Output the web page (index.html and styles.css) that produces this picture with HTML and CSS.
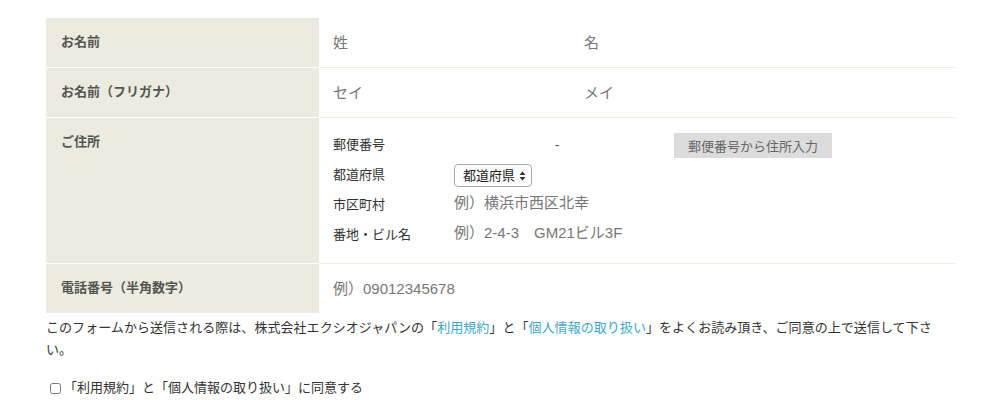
FILE: index.html
```html
<!DOCTYPE html>
<html lang="ja">
<head>
    <meta charset="UTF-8">
    <meta name="viewport" content="width=device-width, initial-scale=1.0">
    <title>お問い合わせフォーム</title>
    <link rel="stylesheet" href="styles.css">
</head>
<body>
    <table class="form-table">
        <tr>
            <th>お名前</th>
            <td>
                <div class="name-pair">
                    <input class="field name" type="text" placeholder="姓">
                    <input class="field name" type="text" placeholder="名">
                </div>
            </td>
        </tr>
        <tr>
            <th>お名前（フリガナ）</th>
            <td>
                <div class="name-pair">
                    <input class="field name" type="text" placeholder="セイ">
                    <input class="field name" type="text" placeholder="メイ">
                </div>
            </td>
        </tr>
        <tr>
            <th>ご住所</th>
            <td class="address">
                <div class="address-grid">
                    <span class="sub-label">郵便番号</span>
                    <div class="zip-row">
                        <input class="field zip" type="text">
                        <span class="dash">-</span>
                        <input class="field zip" type="text">
                        <button class="zip-btn" type="button">郵便番号から住所入力</button>
                    </div>

                    <span class="sub-label">都道府県</span>
                    <div>
                        <span class="select-wrap">
                            <select class="pref">
                                <option>都道府県</option>
                                <option>神奈川県</option>
                                <option>東京都</option>
                            </select>
                            <svg class="select-arrow" width="7" height="10" viewBox="0 0 7 10">
                                <path d="M0.5 4 L3.5 0.5 L6.5 4 Z M0.5 6 L3.5 9.5 L6.5 6 Z" fill="#333"/>
                            </svg>
                        </span>
                    </div>

                    <span class="sub-label">市区町村</span>
                    <input class="field wide" type="text" placeholder="例）横浜市西区北幸">

                    <span class="sub-label">番地・ビル名</span>
                    <input class="field wide" type="text" placeholder="例）2-4-3　GM21ビル3F">
                </div>
            </td>
        </tr>
        <tr class="last">
            <th>電話番号（半角数字）</th>
            <td><input class="field wide" type="text" placeholder="例）09012345678"></td>
        </tr>
    </table>

    <p class="notice">このフォームから送信される際は、株式会社エクシオジャパンの「<a href="#">利用規約</a>」と「<a href="#">個人情報の取り扱い</a>」をよくお読み頂き、ご同意の上で送信して下さい。</p>

    <label class="agree">
        <input type="checkbox">
        <span>「利用規約」と「個人情報の取り扱い」に同意する</span>
    </label>
</body>
</html>
```

FILE: styles.css
```css
body {
    font-family: "Liberation Sans", "Noto Sans CJK JP", sans-serif;
    margin: 0;
    padding: 18px 46px 0;
    background-color: #fff;
    color: #333;
    text-spacing-trim: space-all;
}
.form-table {
    width: 909px;
    border-collapse: collapse;
}
.form-table th {
    width: 243px;
    background-color: #ecebdf;
    color: #555;
    font-size: 13px;
    font-weight: bold;
    line-height: 20px;
    text-align: left;
    vertical-align: top;
    padding: 14px 15px 15px;
    border-bottom: 1px solid #fff;
}
.form-table td {
    padding: 0 14px;
    border-bottom: 1px solid #edecdf;
    vertical-align: middle;
}
.form-table tr.last th,
.form-table tr.last td {
    border-bottom: none;
}
.field {
    font-family: inherit;
    font-size: 15px;
    color: #555;
    border: none;
    background: transparent;
    padding: 0;
    height: 24px;
    outline: none;
}
.field::placeholder {
    color: #777;
}
.name-pair {
    display: flex;
    gap: 15px;
}
.name {
    width: 236px;
}
.wide {
    width: 300px;
}
.form-table td.address {
    padding: 12px 14px 13px;
}
.address-grid {
    display: grid;
    grid-template-columns: 121px auto;
    grid-auto-rows: 30px;
    align-items: center;
}
.address-grid .wide {
    margin-bottom: 6px;
}
.sub-label {
    font-size: 13px;
    color: #333;
    padding-bottom: 3px;
}
.zip-row {
    display: flex;
    align-items: center;
}
.zip {
    width: 96px;
}
.dash {
    font-size: 14px;
    color: #555;
    width: 14px;
    text-align: center;
}
.zip-btn {
    margin-left: 14px;
    height: 25px;
    padding: 0 14px;
    border: none;
    background-color: #dcdcdc;
    color: #666;
    font-family: inherit;
    font-size: 13px;
    cursor: pointer;
}
.select-wrap {
    position: relative;
    display: inline-block;
}
.pref {
    appearance: none;
    -webkit-appearance: none;
    height: 23px;
    width: 78px;
    padding: 0 16px 0 8px;
    border: 1px solid #a9a9a9;
    border-radius: 4px;
    background: #fff;
    font-family: inherit;
    font-size: 13px;
    color: #222;
}
.select-arrow {
    position: absolute;
    right: 6px;
    top: 7px;
    pointer-events: none;
}
.notice {
    margin: 4px 0 0;
    font-size: 13px;
    line-height: 22px;
    letter-spacing: 0.05px;
    color: #333;
}
.notice a {
    color: #3fa8c8;
    text-decoration: none;
}
.agree {
    display: flex;
    align-items: center;
    gap: 3px;
    margin-top: 16px;
    font-size: 13px;
    line-height: 22px;
    color: #333;
}
.agree input {
    margin: 0 0 0 4px;
    width: 11px;
    height: 11px;
}
```
